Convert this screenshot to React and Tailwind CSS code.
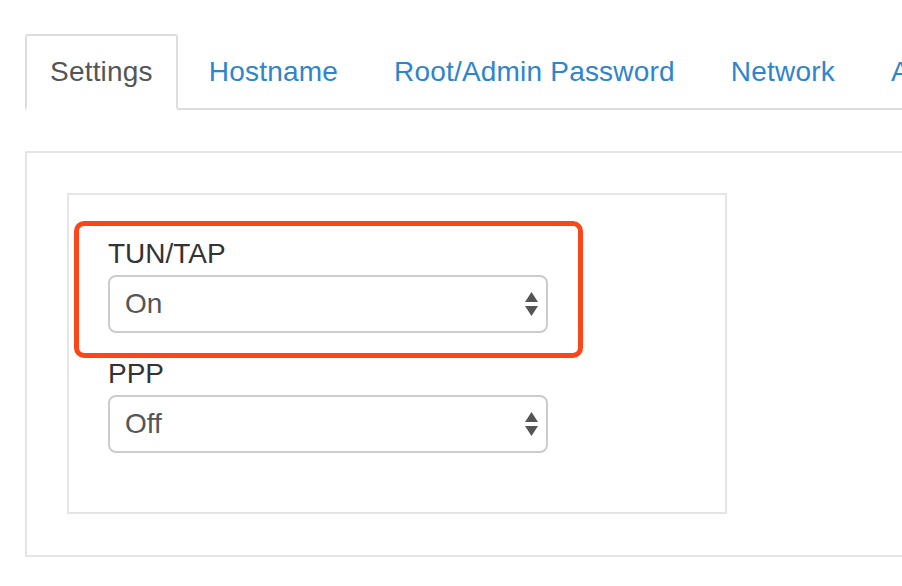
const tabs = ["Settings", "Hostname", "Root/Admin Password", "Network", "Advanced"];

const Arrows = () => (
  <svg width="13" height="24" viewBox="0 0 13 24" className="shrink-0">
    <path d="M6.5 0 L13 10 L0 10 Z" fill="#555" />
    <path d="M0 14 L13 14 L6.5 24 Z" fill="#555" />
  </svg>
);

const SelectBox = ({ value }) => (
  <div className="w-[440px] h-[58px] mt-px flex items-center justify-between pl-[15px] pr-[8px] border-2 border-[#cccccc] rounded-[8px] bg-white text-[#555] text-[28px]">
    <span>{value}</span>
    <Arrows />
  </div>
);

const App = () => {
  return (
    <div
      className="w-[902px] h-[586px] overflow-hidden bg-white pt-[34px] pl-[25px]"
      style={{ fontFamily: '"Liberation Sans", Arial, sans-serif' }}
    >
      {/* Tabs */}
      <ul className="flex w-[1000px] border-b-2 border-[#dddddd] text-[28px] leading-[40px] tracking-[0.2px]">
        {tabs.map((tab, i) => (
          <li key={tab} className="-mb-[2px] mr-[6px] whitespace-nowrap">
            {i === 0 ? (
              <div className="px-[23px] pt-[16px] pb-[16px] border-2 border-[#dddddd] border-b-white rounded-t-[3px] bg-white text-[#555]">
                {tab}
              </div>
            ) : (
              <div className="px-[23px] pt-[16px] pb-[16px] border-2 border-transparent text-[#2f85cb]">
                {tab}
              </div>
            )}
          </li>
        ))}
      </ul>

      {/* Panel */}
      <div className="mt-[41px] w-[1000px] border-2 border-[#e5e5e5] pt-[40px] pl-[40px] pb-[41px]">
        <div className="relative w-[660px] border-2 border-[#e5e5e5] pt-[39px] pl-[39px] pb-[59px]">
          <div>
            <div className="text-[28px] leading-[40px] text-[#333]">TUN/TAP</div>
            <SelectBox value="On" />
          </div>
          <div className="mt-[21px]">
            <div className="text-[28px] leading-[40px] text-[#333]">PPP</div>
            <SelectBox value="Off" />
          </div>

          {/* highlight annotation */}
          <div className="absolute left-[5px] top-[26px] w-[509px] h-[137px] border-[5px] border-[#fc4519] rounded-[10px]" />
        </div>
      </div>
    </div>
  );
};

export default App;
